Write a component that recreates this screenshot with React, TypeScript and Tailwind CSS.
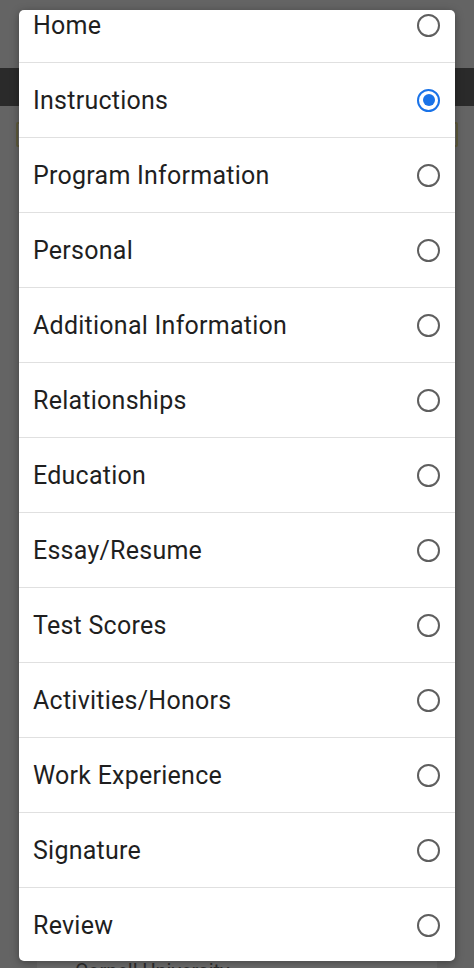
import React from "react";

const items = [
  "Home",
  "Instructions",
  "Program Information",
  "Personal",
  "Additional Information",
  "Relationships",
  "Education",
  "Essay/Resume",
  "Test Scores",
  "Activities/Honors",
  "Work Experience",
  "Signature",
  "Review",
];

export default function App() {
  const selected = 1;
  return (
    <div
      className="relative w-[474px] h-[968px] overflow-hidden bg-[#646464]"
      style={{ fontFamily: "Roboto, 'Noto Sans', sans-serif" }}
    >
      {/* background page (dimmed) */}
      <div className="flex flex-col">
        <div className="h-[68px]" />
        <div className="h-[38px] bg-[#2a2a2a]" />
        <div className="px-[16px] pt-[16px]">
          <div className="h-[25px] rounded-[2px] border-2 border-[#5e5a3c]" />
        </div>
        <div className="h-[812px]" />
        <div className="mx-[37px] h-[40px] bg-[#6c6c6c] pl-[38px]">
          <span className="text-[20px] leading-[24px] text-[#2c2c2c]">Cornell University</span>
        </div>
      </div>

      {/* dialog */}
      <div className="absolute left-[19px] top-[10px] w-[436px] h-[951px] rounded-[5px] bg-white overflow-hidden shadow-[0_2px_8px_rgba(0,0,0,0.35)]">
        <div className="-mt-[22px] flex flex-col">
          {items.map((label, i) => (
            <div
              key={label}
              className="h-[75px] flex items-center justify-between pl-[14px] pr-[15px] border-b border-[#e0e0e0]"
            >
              <span className="pt-[2px] text-[25px] tracking-[0.25px] text-[#1f1f1f]">{label}</span>
              {i === selected ? (
                <span className="w-[23px] h-[23px] rounded-full border-[2.5px] border-[#1a73e8] flex items-center justify-center">
                  <span className="w-[12px] h-[12px] rounded-full bg-[#1a73e8]" />
                </span>
              ) : (
                <span className="w-[23px] h-[23px] rounded-full border-[2px] border-[#5f5f5f]" />
              )}
            </div>
          ))}
        </div>
      </div>
    </div>
  );
}
